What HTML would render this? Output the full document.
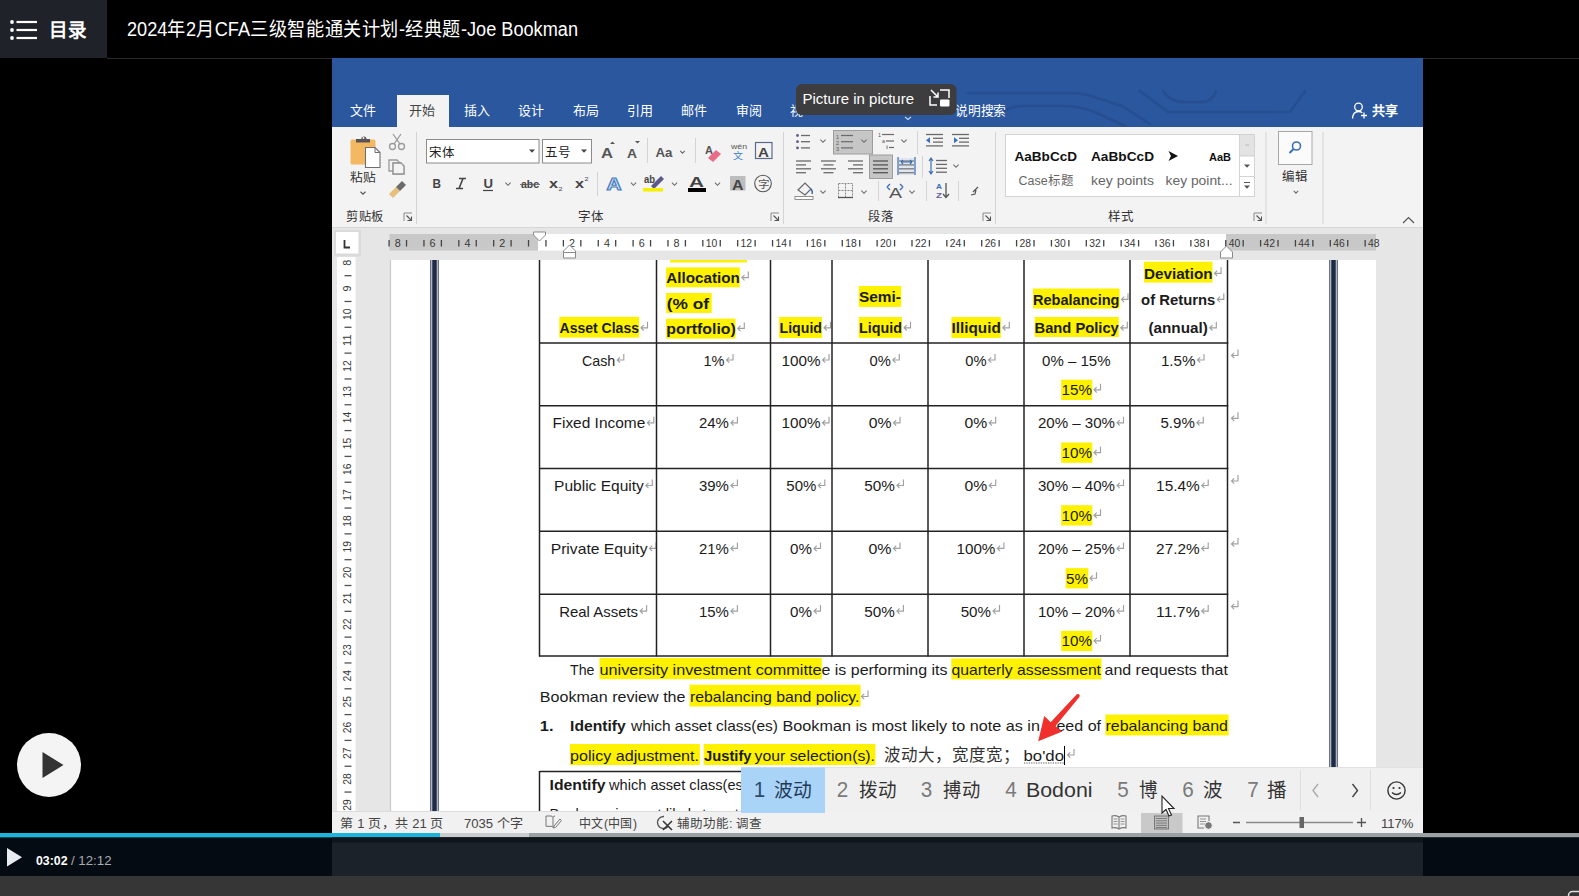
<!DOCTYPE html>
<html lang="zh-CN"><head><meta charset="utf-8"><title>Word video</title>
<style>
html,body{margin:0;padding:0;background:#000;width:1579px;height:896px;overflow:hidden}
svg{display:block}
text{font-family:"Liberation Sans",sans-serif}
</style></head><body>
<svg width="1579" height="896" viewBox="0 0 1579 896">
<rect x="0" y="0" width="1579" height="896" fill="#000" />
<rect x="0" y="0" width="107" height="58" fill="#1f2329" />
<line x1="107" y1="58.5" x2="1579" y2="58.5" stroke="#2a2a2a" stroke-width="1" />
<circle cx="12" cy="22" r="1.9" fill="#fff"/>
<rect x="16.5" y="20.9" width="20.5" height="2.2" fill="#fff" />
<circle cx="12" cy="30" r="1.9" fill="#fff"/>
<rect x="16.5" y="28.9" width="20.5" height="2.2" fill="#fff" />
<circle cx="12" cy="38" r="1.9" fill="#fff"/>
<rect x="16.5" y="36.9" width="20.5" height="2.2" fill="#fff" />
<text x="49" y="37" font-size="19" fill="#fff" font-weight="bold" textLength="37" lengthAdjust="spacingAndGlyphs" >目录</text>
<text x="127" y="36" font-size="19.5" fill="#fff" textLength="451" lengthAdjust="spacingAndGlyphs" >2024年2月CFA三级智能通关计划-经典题-Joe Bookman</text>
<rect x="332" y="58" width="1091" height="69" fill="#2a579e" />
<rect x="397" y="95" width="52" height="32" fill="#f3f3f3" />
<g stroke="#24498a" stroke-width="2.6" fill="none" stroke-linecap="round" opacity="0.6">
<path d="M968 93 H1072 Q1085 93 1100 99 L1122 106 L1150 124" fill="none" />
<path d="M1003 112 Q1010 106 1025 106 H1062 Q1080 106 1095 112 L1125 126" fill="none" />
<path d="M1140 91 L1168 112 H1290 L1305 91" fill="none" />
<path d="M1163 91 Q1170 102 1185 102 H1202 Q1212 102 1216 91" fill="none" />
</g>
<text x="350" y="114.5" font-size="13" fill="#fff" font-weight="500" textLength="26" lengthAdjust="spacingAndGlyphs" >文件</text>
<text x="409" y="114.5" font-size="13" fill="#444" font-weight="500" textLength="26" lengthAdjust="spacingAndGlyphs" >开始</text>
<text x="464" y="114.5" font-size="13" fill="#fff" font-weight="500" textLength="26" lengthAdjust="spacingAndGlyphs" >插入</text>
<text x="518" y="114.5" font-size="13" fill="#fff" font-weight="500" textLength="26" lengthAdjust="spacingAndGlyphs" >设计</text>
<text x="573" y="114.5" font-size="13" fill="#fff" font-weight="500" textLength="26" lengthAdjust="spacingAndGlyphs" >布局</text>
<text x="627" y="114.5" font-size="13" fill="#fff" font-weight="500" textLength="26" lengthAdjust="spacingAndGlyphs" >引用</text>
<text x="681" y="114.5" font-size="13" fill="#fff" font-weight="500" textLength="26" lengthAdjust="spacingAndGlyphs" >邮件</text>
<text x="736" y="114.5" font-size="13" fill="#fff" font-weight="500" textLength="26" lengthAdjust="spacingAndGlyphs" >审阅</text>
<text x="790" y="114.5" font-size="13" fill="#fff" font-weight="500" textLength="13" lengthAdjust="spacingAndGlyphs" >视</text>
<text x="955" y="114.5" font-size="13" fill="#fff" font-weight="500" textLength="51" lengthAdjust="spacingAndGlyphs" >说明搜索</text>
<circle cx="1358.5" cy="107" r="3.8" fill="none" stroke="#fff" stroke-width="1.3"/>
<path d="M1352.5 118.5 c0.3-4.5 2.8-7 6-7 c1.5 0 2.8 0.5 3.8 1.3 M1361 115.5 h6 M1364 112.5 v6" fill="none" stroke="#fff" stroke-width="1.3" />
<text x="1372" y="114.5" font-size="13" fill="#fff" font-weight="bold" textLength="26" lengthAdjust="spacingAndGlyphs" >共享</text>
<rect x="332" y="127" width="1091" height="100" fill="#f3f3f3" />
<line x1="332" y1="227.5" x2="1423" y2="227.5" stroke="#d6d6d6" stroke-width="1" />
<rect x="350.5" y="139.5" width="25" height="25" fill="#f4b862" rx="1.5"/>
<path d="M356 142.5 h14 v-3.5 h-3.5 a2.6 2.6 0 0 0 -5.2 0 h-5.3 Z" fill="#5a5555" />
<circle cx="363.5" cy="138" r="1" fill="#f3f3f3"/>
<path d="M365.5 147.5 h9.5 l5 5 v15 h-14.5 Z" fill="#fff" stroke="#6f6f6f" stroke-width="1.1" />
<path d="M375 147.5 v5 h5" fill="none" stroke="#6f6f6f" stroke-width="1" />
<text x="349.5" y="182" font-size="12.5" fill="#333" font-weight="500" textLength="26.5" lengthAdjust="spacingAndGlyphs" >粘贴</text>
<path d="M360.5 191.75 L363 194.25 L365.5 191.75" fill="none" stroke="#555" stroke-width="1.1" />
<g fill="none" stroke="#9a9a9a" stroke-width="1.3">
<circle cx="392.5" cy="146.5" r="3"/><circle cx="401.5" cy="146.5" r="3"/>
<path d="M394 144 L401 134 M400 144 L393 134" fill="none" />
<path d="M389 160 h8 l3 3 v8 h-11 Z M393 163 h8 l3 3 v8 h-11 Z" fill="none" />
</g>
<rect x="393.5" y="163.5" width="10" height="10" fill="#f3f3f3" />
<path d="M393 163 h8 l3 3 v8 h-11 Z" fill="none" stroke="#9a9a9a" stroke-width="1.3" />
<path d="M389 194 L396 187 L400 191 L393 198 Z" fill="#e8c07d" />
<path d="M396 187 L402 181 L406 185 L400 191 Z" fill="#6b6b6b" />
<line x1="416.5" y1="132" x2="416.5" y2="224" stroke="#d4d4d4" stroke-width="1" />
<text x="346" y="220.5" font-size="12.5" fill="#333" font-weight="500" textLength="38" lengthAdjust="spacingAndGlyphs" >剪贴板</text>
<path d="M404 221 V213 H412" fill="none" stroke="#8a8a8a" stroke-width="1" />
<path d="M406.5 215.5 L411.5 220.5 M411.5 216.5 V220.5 H407.5" fill="none" stroke="#555" stroke-width="1.1" />
<rect x="426.5" y="139.5" width="112.5" height="23.5" fill="#fff" stroke="#8c8c8c" stroke-width="1"/>
<text x="428.5" y="156.8" font-size="12.5" fill="#222" textLength="26" lengthAdjust="spacingAndGlyphs" >宋体</text>
<path d="M529 149.5 L535 149.5 L532 152.8 Z" fill="#444" />
<rect x="542.5" y="139.5" width="49" height="23.5" fill="#fff" stroke="#8c8c8c" stroke-width="1"/>
<text x="544.5" y="156.8" font-size="12.5" fill="#222" textLength="26" lengthAdjust="spacingAndGlyphs" >五号</text>
<path d="M581 149.5 L587 149.5 L584 152.8 Z" fill="#444" />
<text x="601" y="157.5" font-size="15" fill="#555" font-weight="bold" textLength="12" lengthAdjust="spacingAndGlyphs" >A</text>
<path d="M610 144 l2.5 -2.5 l2.5 2.5 Z" fill="#555" />
<text x="627" y="157.5" font-size="12.5" fill="#555" font-weight="bold" textLength="10" lengthAdjust="spacingAndGlyphs" >A</text>
<path d="M635 141 h5 l-2.5 2.5 Z" fill="#555" />
<line x1="647.5" y1="138" x2="647.5" y2="163" stroke="#d4d4d4" stroke-width="1" />
<text x="655.5" y="156.5" font-size="13.5" fill="#555" font-weight="bold" textLength="17" lengthAdjust="spacingAndGlyphs" >Aa</text>
<path d="M680.2 150.85 L682.5 153.15 L684.8 150.85" fill="none" stroke="#6a6a6a" stroke-width="1.1" />
<line x1="695.5" y1="138" x2="695.5" y2="163" stroke="#d4d4d4" stroke-width="1" />
<text x="705" y="154" font-size="11" fill="#555" font-weight="bold" textLength="8" lengthAdjust="spacingAndGlyphs" >A</text>
<path d="M708 158 L716 150 L721 154 L713 162 Z" fill="#e96b87" />
<text x="731" y="149" font-size="7" fill="#555" textLength="16" lengthAdjust="spacingAndGlyphs" >wén</text>
<text x="733" y="159" font-size="9" fill="#3b7fc4" textLength="10" lengthAdjust="spacingAndGlyphs" >文</text>
<rect x="755.5" y="142.5" width="16.5" height="16" fill="none" stroke="#5a6a8a" stroke-width="1.2"/>
<text x="758" y="156.8" font-size="13.5" fill="#444" font-weight="bold" textLength="11" lengthAdjust="spacingAndGlyphs" >A</text>
<text x="432.5" y="188.2" font-size="12.5" fill="#444" font-weight="bold" textLength="8.5" lengthAdjust="spacingAndGlyphs" >B</text>
<path d="M459 178.5 h7 M456 188.5 h7 M463 178.5 L459 188.5" fill="none" stroke="#444" stroke-width="1.6" />
<text x="483.5" y="187.5" font-size="12.5" fill="#444" font-weight="bold" textLength="9.5" lengthAdjust="spacingAndGlyphs" >U</text>
<line x1="483" y1="190.5" x2="493" y2="190.5" stroke="#444" stroke-width="1.2" />
<path d="M505.4 182.7 L508 185.3 L510.6 182.7" fill="none" stroke="#6a6a6a" stroke-width="1.1" />
<text x="521" y="188" font-size="11.5" fill="#444" font-weight="bold" textLength="18" lengthAdjust="spacingAndGlyphs" >abc</text>
<line x1="520" y1="184.5" x2="540" y2="184.5" stroke="#555" stroke-width="0.8" />
<text x="549" y="188" font-size="13" fill="#444" font-weight="bold" textLength="9" lengthAdjust="spacingAndGlyphs" >x</text>
<text x="558.5" y="191" font-size="6" fill="#444" textLength="4" lengthAdjust="spacingAndGlyphs" >2</text>
<text x="575" y="188" font-size="13" fill="#444" font-weight="bold" textLength="9" lengthAdjust="spacingAndGlyphs" >x</text>
<text x="584.5" y="181" font-size="6" fill="#444" textLength="4" lengthAdjust="spacingAndGlyphs" >2</text>
<line x1="597.5" y1="172" x2="597.5" y2="196" stroke="#d4d4d4" stroke-width="1" />
<text x="606.5" y="190" font-size="16" fill="#dbe8f7" font-weight="bold" textLength="15" lengthAdjust="spacingAndGlyphs" stroke="#4a7fc1" stroke-width="1.1">A</text>
<path d="M630.9 182.7 L633.5 185.3 L636.1 182.7" fill="none" stroke="#6a6a6a" stroke-width="1.1" />
<text x="644" y="183" font-size="10" fill="#444" font-weight="bold" textLength="11" lengthAdjust="spacingAndGlyphs" >ab</text>
<path d="M651 186 L661 176 L664 179 L654 189 Z" fill="#5a5a8a" />
<rect x="643" y="188" width="20" height="3.5" fill="#f5f000" />
<path d="M671.9 182.7 L674.5 185.3 L677.1 182.7" fill="none" stroke="#6a6a6a" stroke-width="1.1" />
<text x="689" y="187" font-size="15" fill="#444" font-weight="bold" textLength="15" lengthAdjust="spacingAndGlyphs" >A</text>
<rect x="688" y="188" width="18" height="4" fill="#000" />
<path d="M714.9 182.7 L717.5 185.3 L720.1 182.7" fill="none" stroke="#6a6a6a" stroke-width="1.1" />
<rect x="730" y="176" width="15.5" height="14.5" fill="#bdbdbd" />
<text x="732" y="189.5" font-size="14" fill="#444" font-weight="bold" textLength="11.5" lengthAdjust="spacingAndGlyphs" >A</text>
<circle cx="763" cy="183.5" r="8.3" fill="none" stroke="#555" stroke-width="1.1"/>
<text x="757.5" y="188" font-size="10.5" fill="#555" textLength="11" lengthAdjust="spacingAndGlyphs" >字</text>
<text x="578" y="220.5" font-size="12.5" fill="#333" font-weight="500" textLength="26" lengthAdjust="spacingAndGlyphs" >字体</text>
<path d="M771 221 V213 H779" fill="none" stroke="#8a8a8a" stroke-width="1" />
<path d="M773.5 215.5 L778.5 220.5 M778.5 216.5 V220.5 H774.5" fill="none" stroke="#555" stroke-width="1.1" />
<line x1="783.5" y1="132" x2="783.5" y2="224" stroke="#d4d4d4" stroke-width="1" />
<circle cx="797.5" cy="135.5" r="1.4" fill="#5a5a8a"/>
<line x1="801" y1="135.5" x2="810" y2="135.5" stroke="#6a6a6a" stroke-width="1.3" />
<circle cx="797.5" cy="141.7" r="1.4" fill="#5a5a8a"/>
<line x1="801" y1="141.7" x2="810" y2="141.7" stroke="#6a6a6a" stroke-width="1.3" />
<circle cx="797.5" cy="147.9" r="1.4" fill="#5a5a8a"/>
<line x1="801" y1="147.9" x2="810" y2="147.9" stroke="#6a6a6a" stroke-width="1.3" />
<path d="M820.4 139.7 L823 142.3 L825.6 139.7" fill="none" stroke="#6a6a6a" stroke-width="1.1" />
<rect x="833.5" y="130.5" width="39" height="23.5" fill="#c6c6c6" stroke="#9d9d9d" stroke-width="1"/>
<text x="836" y="138.5" font-size="5.5" fill="#555" textLength="3" lengthAdjust="spacingAndGlyphs" >1</text>
<line x1="841" y1="135.5" x2="853" y2="135.5" stroke="#6a6a6a" stroke-width="1.2" />
<text x="836" y="144.7" font-size="5.5" fill="#555" textLength="3" lengthAdjust="spacingAndGlyphs" >2</text>
<line x1="841" y1="141.7" x2="853" y2="141.7" stroke="#6a6a6a" stroke-width="1.2" />
<text x="836" y="150.9" font-size="5.5" fill="#555" textLength="3" lengthAdjust="spacingAndGlyphs" >3</text>
<line x1="841" y1="147.9" x2="853" y2="147.9" stroke="#6a6a6a" stroke-width="1.2" />
<path d="M861.4 139.7 L864 142.3 L866.6 139.7" fill="none" stroke="#6a6a6a" stroke-width="1.1" />
<text x="878" y="137" font-size="5.5" fill="#555" textLength="3" lengthAdjust="spacingAndGlyphs" >1</text>
<line x1="882" y1="134.5" x2="894" y2="134.5" stroke="#6a6a6a" stroke-width="1.2" />
<text x="882" y="143" font-size="5.5" fill="#555" textLength="3" lengthAdjust="spacingAndGlyphs" >a</text>
<line x1="886" y1="141" x2="894" y2="141" stroke="#6a6a6a" stroke-width="1.2" />
<text x="886" y="149" font-size="5.5" fill="#555" textLength="2" lengthAdjust="spacingAndGlyphs" >i</text>
<line x1="889" y1="147.5" x2="894" y2="147.5" stroke="#6a6a6a" stroke-width="1.2" />
<path d="M901.4 139.7 L904 142.3 L906.6 139.7" fill="none" stroke="#6a6a6a" stroke-width="1.1" />
<line x1="917.5" y1="131" x2="917.5" y2="154" stroke="#d4d4d4" stroke-width="1" />
<line x1="926" y1="134.5" x2="943" y2="134.5" stroke="#6a6a6a" stroke-width="1.3" />
<line x1="933" y1="138.3" x2="943" y2="138.3" stroke="#6a6a6a" stroke-width="1.3" />
<line x1="933" y1="142.1" x2="943" y2="142.1" stroke="#6a6a6a" stroke-width="1.3" />
<line x1="926" y1="145.9" x2="943" y2="145.9" stroke="#6a6a6a" stroke-width="1.3" />
<path d="M926 140.2 l4 -3 v6 Z" fill="#3b6fb5" />
<line x1="952" y1="134.5" x2="969" y2="134.5" stroke="#6a6a6a" stroke-width="1.3" />
<line x1="959" y1="138.3" x2="969" y2="138.3" stroke="#6a6a6a" stroke-width="1.3" />
<line x1="959" y1="142.1" x2="969" y2="142.1" stroke="#6a6a6a" stroke-width="1.3" />
<line x1="952" y1="145.9" x2="969" y2="145.9" stroke="#6a6a6a" stroke-width="1.3" />
<path d="M958 140.2 l-4 -3 v6 Z" fill="#3b6fb5" />
<line x1="796" y1="161.0" x2="811" y2="161.0" stroke="#6a6a6a" stroke-width="1.3" />
<line x1="796" y1="164.9" x2="806" y2="164.9" stroke="#6a6a6a" stroke-width="1.3" />
<line x1="796" y1="168.8" x2="811" y2="168.8" stroke="#6a6a6a" stroke-width="1.3" />
<line x1="796" y1="172.7" x2="806" y2="172.7" stroke="#6a6a6a" stroke-width="1.3" />
<line x1="821" y1="161.0" x2="836" y2="161.0" stroke="#6a6a6a" stroke-width="1.3" />
<line x1="823.5" y1="164.9" x2="833.5" y2="164.9" stroke="#6a6a6a" stroke-width="1.3" />
<line x1="821" y1="168.8" x2="836" y2="168.8" stroke="#6a6a6a" stroke-width="1.3" />
<line x1="823.5" y1="172.7" x2="833.5" y2="172.7" stroke="#6a6a6a" stroke-width="1.3" />
<line x1="848" y1="161.0" x2="863" y2="161.0" stroke="#6a6a6a" stroke-width="1.3" />
<line x1="853" y1="164.9" x2="863" y2="164.9" stroke="#6a6a6a" stroke-width="1.3" />
<line x1="848" y1="168.8" x2="863" y2="168.8" stroke="#6a6a6a" stroke-width="1.3" />
<line x1="853" y1="172.7" x2="863" y2="172.7" stroke="#6a6a6a" stroke-width="1.3" />
<rect x="869.5" y="155" width="23" height="23.5" fill="#c6c6c6" stroke="#9d9d9d" stroke-width="1"/>
<line x1="873" y1="161.0" x2="888" y2="161.0" stroke="#555" stroke-width="1.3" />
<line x1="873" y1="164.9" x2="888" y2="164.9" stroke="#555" stroke-width="1.3" />
<line x1="873" y1="168.8" x2="888" y2="168.8" stroke="#555" stroke-width="1.3" />
<line x1="873" y1="172.7" x2="888" y2="172.7" stroke="#555" stroke-width="1.3" />
<rect x="898" y="158" width="17" height="17" fill="#dfe6f0" />
<line x1="899" y1="161.0" x2="914" y2="161.0" stroke="#7a7a7a" stroke-width="1.3" />
<line x1="899" y1="164.9" x2="914" y2="164.9" stroke="#7a7a7a" stroke-width="1.3" />
<line x1="899" y1="168.8" x2="914" y2="168.8" stroke="#7a7a7a" stroke-width="1.3" />
<line x1="899" y1="172.7" x2="914" y2="172.7" stroke="#7a7a7a" stroke-width="1.3" />
<path d="M898 157 v18 M915 157 v18" fill="none" stroke="#3b6fb5" stroke-width="1.2" />
<path d="M901 162 h11 M901 162 l2 -2 M901 162 l2 2 M912 162 l-2 -2 M912 162 l-2 2" fill="none" stroke="#3b6fb5" stroke-width="1.1" />
<line x1="922.5" y1="156" x2="922.5" y2="178" stroke="#d4d4d4" stroke-width="1" />
<line x1="936" y1="160.5" x2="947" y2="160.5" stroke="#6a6a6a" stroke-width="1.3" />
<line x1="936" y1="164.4" x2="947" y2="164.4" stroke="#6a6a6a" stroke-width="1.3" />
<line x1="936" y1="168.3" x2="947" y2="168.3" stroke="#6a6a6a" stroke-width="1.3" />
<line x1="936" y1="172.2" x2="947" y2="172.2" stroke="#6a6a6a" stroke-width="1.3" />
<path d="M931 159 v14 M929 161 l2 -3 l2 3 M929 171 l2 3 l2 -3" fill="none" stroke="#3b6fb5" stroke-width="1.2" />
<path d="M953.4 164.7 L956 167.3 L958.6 164.7" fill="none" stroke="#6a6a6a" stroke-width="1.1" />
<path d="M798 190 L805 183 L811 189 L805 195 Z" fill="none" stroke="#666" stroke-width="1.2" />
<path d="M811 189 q2 3 1 5" fill="none" stroke="#3b6fb5" stroke-width="1.5" />
<rect x="795" y="196.5" width="18" height="3" fill="#fff" stroke="#777" stroke-width="0.8"/>
<path d="M820.4 190.7 L823 193.3 L825.6 190.7" fill="none" stroke="#6a6a6a" stroke-width="1.1" />
<rect x="838.5" y="183.5" width="14" height="14" fill="none" stroke="#8a8a8a" stroke-width="1" stroke-dasharray="2 1"/>
<line x1="845.5" y1="183.5" x2="845.5" y2="197.5" stroke="#8a8a8a" stroke-width="1" stroke-dasharray="2 1"/>
<line x1="838.5" y1="190.5" x2="852.5" y2="190.5" stroke="#8a8a8a" stroke-width="1" stroke-dasharray="2 1"/>
<line x1="838" y1="197.5" x2="853" y2="197.5" stroke="#555" stroke-width="1.3" />
<path d="M861.4 190.7 L864 193.3 L866.6 190.7" fill="none" stroke="#6a6a6a" stroke-width="1.1" />
<line x1="878.5" y1="181" x2="878.5" y2="201" stroke="#d4d4d4" stroke-width="1" />
<text x="889" y="198" font-size="14" fill="#555" textLength="13" lengthAdjust="spacingAndGlyphs" >A</text>
<path d="M887 187 l3 -3 M887 187 l3 3 M903 187 l-3 -3 M903 187 l-3 3" fill="none" stroke="#3b6fb5" stroke-width="1.4" />
<path d="M909.4 190.7 L912 193.3 L914.6 190.7" fill="none" stroke="#6a6a6a" stroke-width="1.1" />
<line x1="926.5" y1="181" x2="926.5" y2="201" stroke="#d4d4d4" stroke-width="1" />
<text x="936" y="189" font-size="7.5" fill="#3b6fb5" font-weight="bold" textLength="6" lengthAdjust="spacingAndGlyphs" >A</text>
<text x="936" y="198" font-size="7.5" fill="#6a5aa0" font-weight="bold" textLength="6" lengthAdjust="spacingAndGlyphs" >Z</text>
<path d="M946 183 v14 M943 194 l3 3.5 l3 -3.5" fill="none" stroke="#555" stroke-width="1.3" />
<line x1="958.5" y1="181" x2="958.5" y2="201" stroke="#d4d4d4" stroke-width="1" />
<path d="M973 192 l5 -5 M971 195 l4 -1 l1 -4" fill="none" stroke="#555" stroke-width="1.2" />
<text x="868" y="220.5" font-size="12.5" fill="#333" font-weight="500" textLength="25.5" lengthAdjust="spacingAndGlyphs" >段落</text>
<path d="M983 221 V213 H991" fill="none" stroke="#8a8a8a" stroke-width="1" />
<path d="M985.5 215.5 L990.5 220.5 M990.5 216.5 V220.5 H986.5" fill="none" stroke="#555" stroke-width="1.1" />
<line x1="995.5" y1="132" x2="995.5" y2="224" stroke="#d4d4d4" stroke-width="1" />
<rect x="1005.5" y="134.5" width="249" height="62" fill="#fff" stroke="#d3d3d3" stroke-width="1"/>
<rect x="1239.5" y="134.5" width="15" height="21.5" fill="#e3e3e3" stroke="#d3d3d3" stroke-width="1"/>
<rect x="1239.5" y="156" width="15" height="20.5" fill="#fff" stroke="#d3d3d3" stroke-width="1"/>
<rect x="1239.5" y="176.5" width="15" height="20" fill="#fff" stroke="#d3d3d3" stroke-width="1"/>
<line x1="1245" y1="145" x2="1249" y2="145" stroke="#bbb" stroke-width="1" />
<path d="M1244 164.5 L1250 164.5 L1247 167.8 Z" fill="#555" />
<line x1="1244" y1="182.5" x2="1250" y2="182.5" stroke="#555" stroke-width="1" />
<path d="M1244 185.5 L1250 185.5 L1247 188.8 Z" fill="#555" />
<text x="1014.5" y="160.5" font-size="12.5" fill="#111" font-weight="bold" textLength="62.5" lengthAdjust="spacingAndGlyphs" >AaBbCcD</text>
<text x="1091" y="160.5" font-size="12.5" fill="#111" font-weight="bold" textLength="63" lengthAdjust="spacingAndGlyphs" >AaBbCcD</text>
<path d="M1168.5 151 L1178 156 L1168.5 161 L1171 156 Z" fill="#111" />
<text x="1209" y="160.5" font-size="10.5" fill="#111" font-weight="bold" textLength="22" lengthAdjust="spacingAndGlyphs" >AaB</text>
<text x="1018.5" y="185" font-size="12.5" fill="#666" textLength="55" lengthAdjust="spacingAndGlyphs" >Case标题</text>
<text x="1091" y="185" font-size="12.5" fill="#666" textLength="63" lengthAdjust="spacingAndGlyphs" >key points</text>
<text x="1165.5" y="185" font-size="12.5" fill="#666" textLength="67" lengthAdjust="spacingAndGlyphs" >key point...</text>
<text x="1108" y="220.5" font-size="12.5" fill="#333" font-weight="500" textLength="26" lengthAdjust="spacingAndGlyphs" >样式</text>
<path d="M1254 221 V213 H1262" fill="none" stroke="#8a8a8a" stroke-width="1" />
<path d="M1256.5 215.5 L1261.5 220.5 M1261.5 216.5 V220.5 H1257.5" fill="none" stroke="#555" stroke-width="1.1" />
<line x1="1266" y1="132" x2="1266" y2="224" stroke="#d4d4d4" stroke-width="1" />
<rect x="1278.5" y="131.5" width="33.5" height="33" fill="#fbfbfb" stroke="#a8a8a8" stroke-width="1"/>
<circle cx="1296.5" cy="146" r="4" fill="none" stroke="#3b6fb5" stroke-width="1.6"/>
<line x1="1293.5" y1="149" x2="1289.5" y2="153" stroke="#3b6fb5" stroke-width="2" />
<text x="1282" y="181" font-size="12.5" fill="#333" font-weight="500" textLength="26" lengthAdjust="spacingAndGlyphs" >编辑</text>
<path d="M1293.8 190.9 L1296 193.1 L1298.2 190.9" fill="none" stroke="#6a6a6a" stroke-width="1.1" />
<line x1="1323" y1="132" x2="1323" y2="224" stroke="#d4d4d4" stroke-width="1" />
<path d="M1403 223 L1408.5 217.5 L1414 223" fill="none" stroke="#555" stroke-width="1.2" />
<rect x="332" y="228" width="1091" height="583" fill="#e6e6e6" />
<rect x="334" y="230" width="27" height="26.5" fill="#dadada" />
<rect x="336" y="232" width="22.5" height="21.5" fill="#fff" />
<path d="M344.5 240 v7.5 h5.5" fill="none" stroke="#333" stroke-width="1.8" />
<rect x="389.5" y="234" width="148.5" height="16.5" fill="#c8c8c8" />
<rect x="538" y="234" width="688" height="16.5" fill="#fff" />
<rect x="1226" y="234" width="150" height="16.5" fill="#c8c8c8" />
<g fill="#505050">
<text x="394.76000000000005" y="246.5" font-size="10.5" fill="#383838" textLength="6" lengthAdjust="spacingAndGlyphs" >8</text>
<rect x="388.44500000000005" y="240" width="1.3" height="6.5" fill="#444" />
<rect x="405.875" y="240" width="1.3" height="6.5" fill="#444" />
<text x="429.62000000000006" y="246.5" font-size="10.5" fill="#383838" textLength="6" lengthAdjust="spacingAndGlyphs" >6</text>
<rect x="423.30500000000006" y="240" width="1.3" height="6.5" fill="#444" />
<rect x="440.735" y="240" width="1.3" height="6.5" fill="#444" />
<text x="464.48" y="246.5" font-size="10.5" fill="#383838" textLength="6" lengthAdjust="spacingAndGlyphs" >4</text>
<rect x="458.165" y="240" width="1.3" height="6.5" fill="#444" />
<rect x="475.59499999999997" y="240" width="1.3" height="6.5" fill="#444" />
<text x="499.34000000000003" y="246.5" font-size="10.5" fill="#383838" textLength="6" lengthAdjust="spacingAndGlyphs" >2</text>
<rect x="493.02500000000003" y="240" width="1.3" height="6.5" fill="#444" />
<rect x="510.455" y="240" width="1.3" height="6.5" fill="#444" />
<rect x="527.885" y="240" width="1.3" height="6.5" fill="#444" />
<rect x="545.315" y="240" width="1.3" height="6.5" fill="#444" />
<text x="569.0600000000001" y="246.5" font-size="10.5" fill="#383838" textLength="6" lengthAdjust="spacingAndGlyphs" >2</text>
<rect x="562.745" y="240" width="1.3" height="6.5" fill="#444" />
<rect x="580.1750000000001" y="240" width="1.3" height="6.5" fill="#444" />
<text x="603.9200000000001" y="246.5" font-size="10.5" fill="#383838" textLength="6" lengthAdjust="spacingAndGlyphs" >4</text>
<rect x="597.605" y="240" width="1.3" height="6.5" fill="#444" />
<rect x="615.0350000000001" y="240" width="1.3" height="6.5" fill="#444" />
<text x="638.7800000000001" y="246.5" font-size="10.5" fill="#383838" textLength="6" lengthAdjust="spacingAndGlyphs" >6</text>
<rect x="632.465" y="240" width="1.3" height="6.5" fill="#444" />
<rect x="649.8950000000001" y="240" width="1.3" height="6.5" fill="#444" />
<text x="673.6400000000001" y="246.5" font-size="10.5" fill="#383838" textLength="6" lengthAdjust="spacingAndGlyphs" >8</text>
<rect x="667.325" y="240" width="1.3" height="6.5" fill="#444" />
<rect x="684.7550000000001" y="240" width="1.3" height="6.5" fill="#444" />
<text x="705.75" y="246.5" font-size="10.5" fill="#383838" textLength="11.5" lengthAdjust="spacingAndGlyphs" >10</text>
<rect x="702.185" y="240" width="1.3" height="6.5" fill="#444" />
<rect x="719.615" y="240" width="1.3" height="6.5" fill="#444" />
<text x="740.61" y="246.5" font-size="10.5" fill="#383838" textLength="11.5" lengthAdjust="spacingAndGlyphs" >12</text>
<rect x="737.045" y="240" width="1.3" height="6.5" fill="#444" />
<rect x="754.475" y="240" width="1.3" height="6.5" fill="#444" />
<text x="775.47" y="246.5" font-size="10.5" fill="#383838" textLength="11.5" lengthAdjust="spacingAndGlyphs" >14</text>
<rect x="771.905" y="240" width="1.3" height="6.5" fill="#444" />
<rect x="789.335" y="240" width="1.3" height="6.5" fill="#444" />
<text x="810.33" y="246.5" font-size="10.5" fill="#383838" textLength="11.5" lengthAdjust="spacingAndGlyphs" >16</text>
<rect x="806.765" y="240" width="1.3" height="6.5" fill="#444" />
<rect x="824.195" y="240" width="1.3" height="6.5" fill="#444" />
<text x="845.19" y="246.5" font-size="10.5" fill="#383838" textLength="11.5" lengthAdjust="spacingAndGlyphs" >18</text>
<rect x="841.625" y="240" width="1.3" height="6.5" fill="#444" />
<rect x="859.0550000000001" y="240" width="1.3" height="6.5" fill="#444" />
<text x="880.0500000000001" y="246.5" font-size="10.5" fill="#383838" textLength="11.5" lengthAdjust="spacingAndGlyphs" >20</text>
<rect x="876.485" y="240" width="1.3" height="6.5" fill="#444" />
<rect x="893.9150000000001" y="240" width="1.3" height="6.5" fill="#444" />
<text x="914.9100000000001" y="246.5" font-size="10.5" fill="#383838" textLength="11.5" lengthAdjust="spacingAndGlyphs" >22</text>
<rect x="911.345" y="240" width="1.3" height="6.5" fill="#444" />
<rect x="928.7750000000001" y="240" width="1.3" height="6.5" fill="#444" />
<text x="949.77" y="246.5" font-size="10.5" fill="#383838" textLength="11.5" lengthAdjust="spacingAndGlyphs" >24</text>
<rect x="946.2049999999999" y="240" width="1.3" height="6.5" fill="#444" />
<rect x="963.635" y="240" width="1.3" height="6.5" fill="#444" />
<text x="984.6300000000001" y="246.5" font-size="10.5" fill="#383838" textLength="11.5" lengthAdjust="spacingAndGlyphs" >26</text>
<rect x="981.065" y="240" width="1.3" height="6.5" fill="#444" />
<rect x="998.4950000000001" y="240" width="1.3" height="6.5" fill="#444" />
<text x="1019.49" y="246.5" font-size="10.5" fill="#383838" textLength="11.5" lengthAdjust="spacingAndGlyphs" >28</text>
<rect x="1015.925" y="240" width="1.3" height="6.5" fill="#444" />
<rect x="1033.355" y="240" width="1.3" height="6.5" fill="#444" />
<text x="1054.35" y="246.5" font-size="10.5" fill="#383838" textLength="11.5" lengthAdjust="spacingAndGlyphs" >30</text>
<rect x="1050.785" y="240" width="1.3" height="6.5" fill="#444" />
<rect x="1068.215" y="240" width="1.3" height="6.5" fill="#444" />
<text x="1089.21" y="246.5" font-size="10.5" fill="#383838" textLength="11.5" lengthAdjust="spacingAndGlyphs" >32</text>
<rect x="1085.6450000000002" y="240" width="1.3" height="6.5" fill="#444" />
<rect x="1103.075" y="240" width="1.3" height="6.5" fill="#444" />
<text x="1124.0700000000002" y="246.5" font-size="10.5" fill="#383838" textLength="11.5" lengthAdjust="spacingAndGlyphs" >34</text>
<rect x="1120.5050000000003" y="240" width="1.3" height="6.5" fill="#444" />
<rect x="1137.9350000000002" y="240" width="1.3" height="6.5" fill="#444" />
<text x="1158.93" y="246.5" font-size="10.5" fill="#383838" textLength="11.5" lengthAdjust="spacingAndGlyphs" >36</text>
<rect x="1155.3650000000002" y="240" width="1.3" height="6.5" fill="#444" />
<rect x="1172.795" y="240" width="1.3" height="6.5" fill="#444" />
<text x="1193.79" y="246.5" font-size="10.5" fill="#383838" textLength="11.5" lengthAdjust="spacingAndGlyphs" >38</text>
<rect x="1190.2250000000001" y="240" width="1.3" height="6.5" fill="#444" />
<rect x="1207.655" y="240" width="1.3" height="6.5" fill="#444" />
<text x="1228.65" y="246.5" font-size="10.5" fill="#383838" textLength="11.5" lengthAdjust="spacingAndGlyphs" >40</text>
<rect x="1225.0850000000003" y="240" width="1.3" height="6.5" fill="#444" />
<rect x="1242.515" y="240" width="1.3" height="6.5" fill="#444" />
<text x="1263.51" y="246.5" font-size="10.5" fill="#383838" textLength="11.5" lengthAdjust="spacingAndGlyphs" >42</text>
<rect x="1259.9450000000002" y="240" width="1.3" height="6.5" fill="#444" />
<rect x="1277.375" y="240" width="1.3" height="6.5" fill="#444" />
<text x="1298.37" y="246.5" font-size="10.5" fill="#383838" textLength="11.5" lengthAdjust="spacingAndGlyphs" >44</text>
<rect x="1294.805" y="240" width="1.3" height="6.5" fill="#444" />
<rect x="1312.235" y="240" width="1.3" height="6.5" fill="#444" />
<text x="1333.23" y="246.5" font-size="10.5" fill="#383838" textLength="11.5" lengthAdjust="spacingAndGlyphs" >46</text>
<rect x="1329.6650000000002" y="240" width="1.3" height="6.5" fill="#444" />
<rect x="1347.095" y="240" width="1.3" height="6.5" fill="#444" />
<text x="1368.0900000000001" y="246.5" font-size="10.5" fill="#383838" textLength="11.5" lengthAdjust="spacingAndGlyphs" >48</text>
<rect x="1364.5250000000003" y="240" width="1.3" height="6.5" fill="#444" />
</g>
<path d="M533.5 232 h12 v3 l-6 6 l-6 -6 Z" fill="#fff" stroke="#8a8a8a" stroke-width="1" />
<path d="M563.5 251 l6 -6 l6 6 v7 h-12 Z M563.5 252.5 h12" fill="#fff" stroke="#8a8a8a" stroke-width="1" />
<path d="M1220.5 252 l6 -6 l6 6 v6 h-12 Z" fill="#fff" stroke="#8a8a8a" stroke-width="1" />
<rect x="337" y="257" width="18.5" height="554" fill="#fff" />
<text transform="translate(350.5 262.7) rotate(-90)" x="-3.0" y="0" font-size="10.5" fill="#383838" textLength="6" lengthAdjust="spacingAndGlyphs">8</text>
<rect x="344.5" y="275.01" width="7" height="1.3" fill="#555" />
<text transform="translate(350.5 288.52) rotate(-90)" x="-3.0" y="0" font-size="10.5" fill="#383838" textLength="6" lengthAdjust="spacingAndGlyphs">9</text>
<rect x="344.5" y="300.83" width="7" height="1.3" fill="#555" />
<text transform="translate(350.5 314.34) rotate(-90)" x="-5.75" y="0" font-size="10.5" fill="#383838" textLength="11.5" lengthAdjust="spacingAndGlyphs">10</text>
<rect x="344.5" y="326.65" width="7" height="1.3" fill="#555" />
<text transform="translate(350.5 340.15999999999997) rotate(-90)" x="-5.75" y="0" font-size="10.5" fill="#383838" textLength="11.5" lengthAdjust="spacingAndGlyphs">11</text>
<rect x="344.5" y="352.46999999999997" width="7" height="1.3" fill="#555" />
<text transform="translate(350.5 365.98) rotate(-90)" x="-5.75" y="0" font-size="10.5" fill="#383838" textLength="11.5" lengthAdjust="spacingAndGlyphs">12</text>
<rect x="344.5" y="378.29" width="7" height="1.3" fill="#555" />
<text transform="translate(350.5 391.79999999999995) rotate(-90)" x="-5.75" y="0" font-size="10.5" fill="#383838" textLength="11.5" lengthAdjust="spacingAndGlyphs">13</text>
<rect x="344.5" y="404.10999999999996" width="7" height="1.3" fill="#555" />
<text transform="translate(350.5 417.62) rotate(-90)" x="-5.75" y="0" font-size="10.5" fill="#383838" textLength="11.5" lengthAdjust="spacingAndGlyphs">14</text>
<rect x="344.5" y="429.93" width="7" height="1.3" fill="#555" />
<text transform="translate(350.5 443.44) rotate(-90)" x="-5.75" y="0" font-size="10.5" fill="#383838" textLength="11.5" lengthAdjust="spacingAndGlyphs">15</text>
<rect x="344.5" y="455.75" width="7" height="1.3" fill="#555" />
<text transform="translate(350.5 469.26) rotate(-90)" x="-5.75" y="0" font-size="10.5" fill="#383838" textLength="11.5" lengthAdjust="spacingAndGlyphs">16</text>
<rect x="344.5" y="481.57" width="7" height="1.3" fill="#555" />
<text transform="translate(350.5 495.08) rotate(-90)" x="-5.75" y="0" font-size="10.5" fill="#383838" textLength="11.5" lengthAdjust="spacingAndGlyphs">17</text>
<rect x="344.5" y="507.39" width="7" height="1.3" fill="#555" />
<text transform="translate(350.5 520.9) rotate(-90)" x="-5.75" y="0" font-size="10.5" fill="#383838" textLength="11.5" lengthAdjust="spacingAndGlyphs">18</text>
<rect x="344.5" y="533.2099999999999" width="7" height="1.3" fill="#555" />
<text transform="translate(350.5 546.72) rotate(-90)" x="-5.75" y="0" font-size="10.5" fill="#383838" textLength="11.5" lengthAdjust="spacingAndGlyphs">19</text>
<rect x="344.5" y="559.03" width="7" height="1.3" fill="#555" />
<text transform="translate(350.5 572.54) rotate(-90)" x="-5.75" y="0" font-size="10.5" fill="#383838" textLength="11.5" lengthAdjust="spacingAndGlyphs">20</text>
<rect x="344.5" y="584.8499999999999" width="7" height="1.3" fill="#555" />
<text transform="translate(350.5 598.36) rotate(-90)" x="-5.75" y="0" font-size="10.5" fill="#383838" textLength="11.5" lengthAdjust="spacingAndGlyphs">21</text>
<rect x="344.5" y="610.67" width="7" height="1.3" fill="#555" />
<text transform="translate(350.5 624.1800000000001) rotate(-90)" x="-5.75" y="0" font-size="10.5" fill="#383838" textLength="11.5" lengthAdjust="spacingAndGlyphs">22</text>
<rect x="344.5" y="636.49" width="7" height="1.3" fill="#555" />
<text transform="translate(350.5 650.0) rotate(-90)" x="-5.75" y="0" font-size="10.5" fill="#383838" textLength="11.5" lengthAdjust="spacingAndGlyphs">23</text>
<rect x="344.5" y="662.31" width="7" height="1.3" fill="#555" />
<text transform="translate(350.5 675.8199999999999) rotate(-90)" x="-5.75" y="0" font-size="10.5" fill="#383838" textLength="11.5" lengthAdjust="spacingAndGlyphs">24</text>
<rect x="344.5" y="688.1299999999999" width="7" height="1.3" fill="#555" />
<text transform="translate(350.5 701.64) rotate(-90)" x="-5.75" y="0" font-size="10.5" fill="#383838" textLength="11.5" lengthAdjust="spacingAndGlyphs">25</text>
<rect x="344.5" y="713.9499999999999" width="7" height="1.3" fill="#555" />
<text transform="translate(350.5 727.46) rotate(-90)" x="-5.75" y="0" font-size="10.5" fill="#383838" textLength="11.5" lengthAdjust="spacingAndGlyphs">26</text>
<rect x="344.5" y="739.77" width="7" height="1.3" fill="#555" />
<text transform="translate(350.5 753.28) rotate(-90)" x="-5.75" y="0" font-size="10.5" fill="#383838" textLength="11.5" lengthAdjust="spacingAndGlyphs">27</text>
<rect x="344.5" y="765.5899999999999" width="7" height="1.3" fill="#555" />
<text transform="translate(350.5 779.0999999999999) rotate(-90)" x="-5.75" y="0" font-size="10.5" fill="#383838" textLength="11.5" lengthAdjust="spacingAndGlyphs">28</text>
<rect x="344.5" y="791.4099999999999" width="7" height="1.3" fill="#555" />
<text transform="translate(350.5 804.9200000000001) rotate(-90)" x="-5.75" y="0" font-size="10.5" fill="#383838" textLength="11.5" lengthAdjust="spacingAndGlyphs">29</text>
<rect x="390" y="260" width="986" height="551" fill="#fff" />
<line x1="390.5" y1="260" x2="390.5" y2="811" stroke="#cacaca" stroke-width="1.2" />
<rect x="430" y="260" width="9" height="551" fill="#6b7282" />
<rect x="431" y="260" width="7" height="551" fill="#aeb7c7" />
<rect x="432.3" y="260" width="4.4" height="551" fill="#1f2b45" />
<rect x="1329" y="260" width="9" height="551" fill="#6b7282" />
<rect x="1330" y="260" width="7" height="551" fill="#aeb7c7" />
<rect x="1331.3" y="260" width="4.4" height="551" fill="#1f2b45" />
<rect x="670" y="260" width="77" height="2.5" fill="#fff200" />
<rect x="559.3" y="316.8" width="79.80000000000007" height="20.80000000000001" fill="#fff200" />
<rect x="666.1" y="267.4" width="73.69999999999993" height="19.900000000000034" fill="#fff200" />
<rect x="666.1" y="293" width="45.60000000000002" height="20" fill="#fff200" />
<rect x="666.1" y="318.6" width="69.39999999999998" height="20.0" fill="#fff200" />
<rect x="779.2" y="317" width="42.799999999999955" height="21" fill="#fff200" />
<rect x="858.8" y="286" width="42.40000000000009" height="20.899999999999977" fill="#fff200" />
<rect x="858.8" y="317" width="43.200000000000045" height="20.899999999999977" fill="#fff200" />
<rect x="951.4" y="317" width="49.39999999999998" height="21" fill="#fff200" />
<rect x="1033" y="288.5" width="86.59999999999991" height="20.100000000000023" fill="#fff200" />
<rect x="1034.7" y="317" width="84.09999999999991" height="20" fill="#fff200" />
<rect x="1143.9" y="261.7" width="68.59999999999991" height="20.900000000000034" fill="#fff200" />
<text x="559.5" y="333.3" font-size="14.6" fill="#1b1b1b" font-weight="bold" textLength="79.5" lengthAdjust="spacingAndGlyphs" >Asset Class</text>
<path d="M647.5 321.8 V327.8 H641.0 M643.7 325.1 L641.0 327.8 L643.7 330.5" fill="none" stroke="#a0a0a0" stroke-width="1.15" />
<text x="666.3" y="283.1" font-size="14.6" fill="#1b1b1b" font-weight="bold" textLength="73.5" lengthAdjust="spacingAndGlyphs" >Allocation</text>
<path d="M748.3 271.6 V277.6 H741.8 M744.5 274.90000000000003 L741.8 277.6 L744.5 280.3" fill="none" stroke="#a0a0a0" stroke-width="1.15" />
<text x="666.7" y="308.6" font-size="14.6" fill="#1b1b1b" font-weight="bold" textLength="42.3" lengthAdjust="spacingAndGlyphs" >(% of</text>
<text x="666.3" y="333.9" font-size="14.6" fill="#1b1b1b" font-weight="bold" textLength="69.5" lengthAdjust="spacingAndGlyphs" >portfolio)</text>
<path d="M744.3 322.4 V328.4 H737.8 M740.5 325.7 L737.8 328.4 L740.5 331.09999999999997" fill="none" stroke="#a0a0a0" stroke-width="1.15" />
<text x="779.5" y="333.3" font-size="14.6" fill="#1b1b1b" font-weight="bold" textLength="42.5" lengthAdjust="spacingAndGlyphs" >Liquid</text>
<path d="M830.5 321.8 V327.8 H824.0 M826.7 325.1 L824.0 327.8 L826.7 330.5" fill="none" stroke="#a0a0a0" stroke-width="1.15" />
<text x="859.0" y="301.9" font-size="14.6" fill="#1b1b1b" font-weight="bold" textLength="42.0" lengthAdjust="spacingAndGlyphs" >Semi-</text>
<text x="859.0" y="333.3" font-size="14.6" fill="#1b1b1b" font-weight="bold" textLength="43.0" lengthAdjust="spacingAndGlyphs" >Liquid</text>
<path d="M910.5 321.8 V327.8 H904.0 M906.7 325.1 L904.0 327.8 L906.7 330.5" fill="none" stroke="#a0a0a0" stroke-width="1.15" />
<text x="951.5" y="333.3" font-size="14.6" fill="#1b1b1b" font-weight="bold" textLength="49.3" lengthAdjust="spacingAndGlyphs" >Illiquid</text>
<path d="M1009.3 321.8 V327.8 H1002.8 M1005.5 325.1 L1002.8 327.8 L1005.5 330.5" fill="none" stroke="#a0a0a0" stroke-width="1.15" />
<text x="1033.0" y="304.9" font-size="14.6" fill="#1b1b1b" font-weight="bold" textLength="86.5" lengthAdjust="spacingAndGlyphs" >Rebalancing</text>
<path d="M1128 293.4 V299.4 H1121.5 M1124.2 296.7 L1121.5 299.4 L1124.2 302.09999999999997" fill="none" stroke="#a0a0a0" stroke-width="1.15" />
<text x="1034.5" y="333.3" font-size="14.6" fill="#1b1b1b" font-weight="bold" textLength="84.3" lengthAdjust="spacingAndGlyphs" >Band Policy</text>
<path d="M1127.3 321.8 V327.8 H1120.8 M1123.5 325.1 L1120.8 327.8 L1123.5 330.5" fill="none" stroke="#a0a0a0" stroke-width="1.15" />
<text x="1144.0" y="278.8" font-size="14.6" fill="#1b1b1b" font-weight="bold" textLength="68.5" lengthAdjust="spacingAndGlyphs" >Deviation</text>
<path d="M1221 267.3 V273.3 H1214.5 M1217.2 270.6 L1214.5 273.3 L1217.2 276.0" fill="none" stroke="#a0a0a0" stroke-width="1.15" />
<text x="1141.1" y="304.9" font-size="14.6" fill="#1b1b1b" font-weight="bold" textLength="74.2" lengthAdjust="spacingAndGlyphs" >of Returns</text>
<path d="M1223.8 293.4 V299.4 H1217.3 M1220.0 296.7 L1217.3 299.4 L1220.0 302.09999999999997" fill="none" stroke="#a0a0a0" stroke-width="1.15" />
<text x="1148.5" y="333.3" font-size="14.6" fill="#1b1b1b" font-weight="bold" textLength="59.3" lengthAdjust="spacingAndGlyphs" >(annual)</text>
<path d="M1216.3 321.8 V327.8 H1209.8 M1212.5 325.1 L1209.8 327.8 L1212.5 330.5" fill="none" stroke="#a0a0a0" stroke-width="1.15" />
<text x="582.0" y="365.5" font-size="14.6" fill="#1b1b1b" textLength="33.3" lengthAdjust="spacingAndGlyphs" >Cash</text>
<path d="M623.8 354.0 V360.0 H617.3 M620.0 357.3 L617.3 360.0 L620.0 362.7" fill="none" stroke="#a0a0a0" stroke-width="1.15" />
<text x="703.5" y="365.5" font-size="14.6" fill="#1b1b1b" textLength="21" lengthAdjust="spacingAndGlyphs" >1%</text>
<path d="M733 354.0 V360.0 H726.5 M729.2 357.3 L726.5 360.0 L729.2 362.7" fill="none" stroke="#a0a0a0" stroke-width="1.15" />
<text x="781.5" y="365.5" font-size="14.6" fill="#1b1b1b" textLength="39" lengthAdjust="spacingAndGlyphs" >100%</text>
<path d="M829 354.0 V360.0 H822.5 M825.2 357.3 L822.5 360.0 L825.2 362.7" fill="none" stroke="#a0a0a0" stroke-width="1.15" />
<text x="869.5" y="365.5" font-size="14.6" fill="#1b1b1b" textLength="21.3" lengthAdjust="spacingAndGlyphs" >0%</text>
<path d="M899.3 354.0 V360.0 H892.8 M895.5 357.3 L892.8 360.0 L895.5 362.7" fill="none" stroke="#a0a0a0" stroke-width="1.15" />
<text x="965.2" y="365.5" font-size="14.6" fill="#1b1b1b" textLength="21.3" lengthAdjust="spacingAndGlyphs" >0%</text>
<path d="M995 354.0 V360.0 H988.5 M991.2 357.3 L988.5 360.0 L991.2 362.7" fill="none" stroke="#a0a0a0" stroke-width="1.15" />
<text x="1042.1" y="365.5" font-size="14.6" fill="#1b1b1b" textLength="68.4" lengthAdjust="spacingAndGlyphs" >0% – 15%</text>
<rect x="1061.2" y="379.7" width="31.09999999999991" height="20.30000000000001" fill="#fff200" />
<text x="1061.5" y="395.3" font-size="14.6" fill="#1b1b1b" textLength="30.5" lengthAdjust="spacingAndGlyphs" >15%</text>
<path d="M1100.5 383.8 V389.8 H1094.0 M1096.7 387.1 L1094.0 389.8 L1096.7 392.5" fill="none" stroke="#a0a0a0" stroke-width="1.15" />
<text x="1160.9" y="365.5" font-size="14.6" fill="#1b1b1b" textLength="34.6" lengthAdjust="spacingAndGlyphs" >1.5%</text>
<path d="M1204 354.0 V360.0 H1197.5 M1200.2 357.3 L1197.5 360.0 L1200.2 362.7" fill="none" stroke="#a0a0a0" stroke-width="1.15" />
<path d="M1238 349.5 V355.5 H1231.5 M1234.2 352.8 L1231.5 355.5 L1234.2 358.2" fill="none" stroke="#a0a0a0" stroke-width="1.15" />
<text x="552.5" y="428.3" font-size="14.6" fill="#1b1b1b" textLength="92.8" lengthAdjust="spacingAndGlyphs" >Fixed Income</text>
<path d="M653.8 416.8 V422.8 H647.3 M650.0 420.1 L647.3 422.8 L650.0 425.5" fill="none" stroke="#a0a0a0" stroke-width="1.15" />
<text x="698.9" y="428.3" font-size="14.6" fill="#1b1b1b" textLength="30.0" lengthAdjust="spacingAndGlyphs" >24%</text>
<path d="M737.4 416.8 V422.8 H730.9 M733.6 420.1 L730.9 422.8 L733.6 425.5" fill="none" stroke="#a0a0a0" stroke-width="1.15" />
<text x="781.5" y="428.3" font-size="14.6" fill="#1b1b1b" textLength="39" lengthAdjust="spacingAndGlyphs" >100%</text>
<path d="M829 416.8 V422.8 H822.5 M825.2 420.1 L822.5 422.8 L825.2 425.5" fill="none" stroke="#a0a0a0" stroke-width="1.15" />
<text x="868.7" y="428.3" font-size="14.6" fill="#1b1b1b" textLength="22.8" lengthAdjust="spacingAndGlyphs" >0%</text>
<path d="M900 416.8 V422.8 H893.5 M896.2 420.1 L893.5 422.8 L896.2 425.5" fill="none" stroke="#a0a0a0" stroke-width="1.15" />
<text x="964.5" y="428.3" font-size="14.6" fill="#1b1b1b" textLength="22.7" lengthAdjust="spacingAndGlyphs" >0%</text>
<path d="M995.7 416.8 V422.8 H989.2 M991.9000000000001 420.1 L989.2 422.8 L991.9000000000001 425.5" fill="none" stroke="#a0a0a0" stroke-width="1.15" />
<text x="1037.9" y="428.3" font-size="14.6" fill="#1b1b1b" textLength="77.1" lengthAdjust="spacingAndGlyphs" >20% – 30%</text>
<path d="M1123.5 416.8 V422.8 H1117.0 M1119.7 420.1 L1117.0 422.8 L1119.7 425.5" fill="none" stroke="#a0a0a0" stroke-width="1.15" />
<rect x="1061.2" y="442.5" width="31.09999999999991" height="20.30000000000001" fill="#fff200" />
<text x="1061.5" y="458.1" font-size="14.6" fill="#1b1b1b" textLength="30.5" lengthAdjust="spacingAndGlyphs" >10%</text>
<path d="M1100.5 446.6 V452.6 H1094.0 M1096.7 449.90000000000003 L1094.0 452.6 L1096.7 455.3" fill="none" stroke="#a0a0a0" stroke-width="1.15" />
<text x="1160.5" y="428.3" font-size="14.6" fill="#1b1b1b" textLength="34.3" lengthAdjust="spacingAndGlyphs" >5.9%</text>
<path d="M1203.3 416.8 V422.8 H1196.8 M1199.5 420.1 L1196.8 422.8 L1199.5 425.5" fill="none" stroke="#a0a0a0" stroke-width="1.15" />
<path d="M1238 412.3 V418.3 H1231.5 M1234.2 415.6 L1231.5 418.3 L1234.2 421.0" fill="none" stroke="#a0a0a0" stroke-width="1.15" />
<text x="554.1" y="491.0" font-size="14.6" fill="#1b1b1b" textLength="89.7" lengthAdjust="spacingAndGlyphs" >Public Equity</text>
<path d="M652.3 479.5 V485.5 H645.8 M648.5 482.8 L645.8 485.5 L648.5 488.2" fill="none" stroke="#a0a0a0" stroke-width="1.15" />
<text x="698.9" y="491.0" font-size="14.6" fill="#1b1b1b" textLength="30.0" lengthAdjust="spacingAndGlyphs" >39%</text>
<path d="M737.4 479.5 V485.5 H730.9 M733.6 482.8 L730.9 485.5 L733.6 488.2" fill="none" stroke="#a0a0a0" stroke-width="1.15" />
<text x="786.3" y="491.0" font-size="14.6" fill="#1b1b1b" textLength="30.0" lengthAdjust="spacingAndGlyphs" >50%</text>
<path d="M824.8 479.5 V485.5 H818.3 M821.0 482.8 L818.3 485.5 L821.0 488.2" fill="none" stroke="#a0a0a0" stroke-width="1.15" />
<text x="864.3" y="491.0" font-size="14.6" fill="#1b1b1b" textLength="30.6" lengthAdjust="spacingAndGlyphs" >50%</text>
<path d="M903.4 479.5 V485.5 H896.9 M899.6 482.8 L896.9 485.5 L899.6 488.2" fill="none" stroke="#a0a0a0" stroke-width="1.15" />
<text x="964.5" y="491.0" font-size="14.6" fill="#1b1b1b" textLength="22.7" lengthAdjust="spacingAndGlyphs" >0%</text>
<path d="M995.7 479.5 V485.5 H989.2 M991.9000000000001 482.8 L989.2 485.5 L991.9000000000001 488.2" fill="none" stroke="#a0a0a0" stroke-width="1.15" />
<text x="1037.9" y="491.0" font-size="14.6" fill="#1b1b1b" textLength="77.1" lengthAdjust="spacingAndGlyphs" >30% – 40%</text>
<path d="M1123.5 479.5 V485.5 H1117.0 M1119.7 482.8 L1117.0 485.5 L1119.7 488.2" fill="none" stroke="#a0a0a0" stroke-width="1.15" />
<rect x="1061.2" y="505.2" width="31.09999999999991" height="20.30000000000001" fill="#fff200" />
<text x="1061.5" y="520.8" font-size="14.6" fill="#1b1b1b" textLength="30.5" lengthAdjust="spacingAndGlyphs" >10%</text>
<path d="M1100.5 509.29999999999995 V515.3 H1094.0 M1096.7 512.5999999999999 L1094.0 515.3 L1096.7 518.0" fill="none" stroke="#a0a0a0" stroke-width="1.15" />
<text x="1156.1" y="491.0" font-size="14.6" fill="#1b1b1b" textLength="43.6" lengthAdjust="spacingAndGlyphs" >15.4%</text>
<path d="M1208.2 479.5 V485.5 H1201.7 M1204.4 482.8 L1201.7 485.5 L1204.4 488.2" fill="none" stroke="#a0a0a0" stroke-width="1.15" />
<path d="M1238 475.0 V481.0 H1231.5 M1234.2 478.3 L1231.5 481.0 L1234.2 483.7" fill="none" stroke="#a0a0a0" stroke-width="1.15" />
<text x="550.7" y="553.9" font-size="14.6" fill="#1b1b1b" textLength="96.8" lengthAdjust="spacingAndGlyphs" >Private Equity</text>
<path d="M656 542.4 V548.4 H649.5 M652.2 545.6999999999999 L649.5 548.4 L652.2 551.1" fill="none" stroke="#a0a0a0" stroke-width="1.15" />
<text x="698.9" y="553.9" font-size="14.6" fill="#1b1b1b" textLength="30.0" lengthAdjust="spacingAndGlyphs" >21%</text>
<path d="M737.4 542.4 V548.4 H730.9 M733.6 545.6999999999999 L730.9 548.4 L733.6 551.1" fill="none" stroke="#a0a0a0" stroke-width="1.15" />
<text x="790.1" y="553.9" font-size="14.6" fill="#1b1b1b" textLength="21.9" lengthAdjust="spacingAndGlyphs" >0%</text>
<path d="M820.5 542.4 V548.4 H814.0 M816.7 545.6999999999999 L814.0 548.4 L816.7 551.1" fill="none" stroke="#a0a0a0" stroke-width="1.15" />
<text x="868.5" y="553.9" font-size="14.6" fill="#1b1b1b" textLength="23" lengthAdjust="spacingAndGlyphs" >0%</text>
<path d="M900 542.4 V548.4 H893.5 M896.2 545.6999999999999 L893.5 548.4 L896.2 551.1" fill="none" stroke="#a0a0a0" stroke-width="1.15" />
<text x="956.5" y="553.9" font-size="14.6" fill="#1b1b1b" textLength="38.9" lengthAdjust="spacingAndGlyphs" >100%</text>
<path d="M1003.9 542.4 V548.4 H997.4 M1000.1 545.6999999999999 L997.4 548.4 L1000.1 551.1" fill="none" stroke="#a0a0a0" stroke-width="1.15" />
<text x="1037.9" y="553.9" font-size="14.6" fill="#1b1b1b" textLength="77.1" lengthAdjust="spacingAndGlyphs" >20% – 25%</text>
<path d="M1123.5 542.4 V548.4 H1117.0 M1119.7 545.6999999999999 L1117.0 548.4 L1119.7 551.1" fill="none" stroke="#a0a0a0" stroke-width="1.15" />
<rect x="1065.7" y="568.1" width="22.59999999999991" height="20.299999999999955" fill="#fff200" />
<text x="1066.0" y="583.6999999999999" font-size="14.6" fill="#1b1b1b" textLength="22.0" lengthAdjust="spacingAndGlyphs" >5%</text>
<path d="M1096.5 572.1999999999999 V578.1999999999999 H1090.0 M1092.7 575.4999999999999 L1090.0 578.1999999999999 L1092.7 580.9" fill="none" stroke="#a0a0a0" stroke-width="1.15" />
<text x="1156.1" y="553.9" font-size="14.6" fill="#1b1b1b" textLength="43.6" lengthAdjust="spacingAndGlyphs" >27.2%</text>
<path d="M1208.2 542.4 V548.4 H1201.7 M1204.4 545.6999999999999 L1201.7 548.4 L1204.4 551.1" fill="none" stroke="#a0a0a0" stroke-width="1.15" />
<path d="M1238 537.9 V543.9 H1231.5 M1234.2 541.1999999999999 L1231.5 543.9 L1234.2 546.6" fill="none" stroke="#a0a0a0" stroke-width="1.15" />
<text x="559.2" y="616.6" font-size="14.6" fill="#1b1b1b" textLength="78.9" lengthAdjust="spacingAndGlyphs" >Real Assets</text>
<path d="M646.6 605.1 V611.1 H640.1 M642.8000000000001 608.4 L640.1 611.1 L642.8000000000001 613.8000000000001" fill="none" stroke="#a0a0a0" stroke-width="1.15" />
<text x="698.9" y="616.6" font-size="14.6" fill="#1b1b1b" textLength="30.0" lengthAdjust="spacingAndGlyphs" >15%</text>
<path d="M737.4 605.1 V611.1 H730.9 M733.6 608.4 L730.9 611.1 L733.6 613.8000000000001" fill="none" stroke="#a0a0a0" stroke-width="1.15" />
<text x="790.1" y="616.6" font-size="14.6" fill="#1b1b1b" textLength="21.9" lengthAdjust="spacingAndGlyphs" >0%</text>
<path d="M820.5 605.1 V611.1 H814.0 M816.7 608.4 L814.0 611.1 L816.7 613.8000000000001" fill="none" stroke="#a0a0a0" stroke-width="1.15" />
<text x="864.3" y="616.6" font-size="14.6" fill="#1b1b1b" textLength="30.6" lengthAdjust="spacingAndGlyphs" >50%</text>
<path d="M903.4 605.1 V611.1 H896.9 M899.6 608.4 L896.9 611.1 L899.6 613.8000000000001" fill="none" stroke="#a0a0a0" stroke-width="1.15" />
<text x="960.7" y="616.6" font-size="14.6" fill="#1b1b1b" textLength="30.3" lengthAdjust="spacingAndGlyphs" >50%</text>
<path d="M999.5 605.1 V611.1 H993.0 M995.7 608.4 L993.0 611.1 L995.7 613.8000000000001" fill="none" stroke="#a0a0a0" stroke-width="1.15" />
<text x="1037.9" y="616.6" font-size="14.6" fill="#1b1b1b" textLength="77.1" lengthAdjust="spacingAndGlyphs" >10% – 20%</text>
<path d="M1123.5 605.1 V611.1 H1117.0 M1119.7 608.4 L1117.0 611.1 L1119.7 613.8000000000001" fill="none" stroke="#a0a0a0" stroke-width="1.15" />
<rect x="1061.2" y="630.8000000000001" width="31.09999999999991" height="20.299999999999955" fill="#fff200" />
<text x="1061.5" y="646.4" font-size="14.6" fill="#1b1b1b" textLength="30.5" lengthAdjust="spacingAndGlyphs" >10%</text>
<path d="M1100.5 634.9 V640.9 H1094.0 M1096.7 638.1999999999999 L1094.0 640.9 L1096.7 643.6" fill="none" stroke="#a0a0a0" stroke-width="1.15" />
<text x="1156.1" y="616.6" font-size="14.6" fill="#1b1b1b" textLength="43.6" lengthAdjust="spacingAndGlyphs" >11.7%</text>
<path d="M1208.2 605.1 V611.1 H1201.7 M1204.4 608.4 L1201.7 611.1 L1204.4 613.8000000000001" fill="none" stroke="#a0a0a0" stroke-width="1.15" />
<path d="M1238 600.6 V606.6 H1231.5 M1234.2 603.9 L1231.5 606.6 L1234.2 609.3000000000001" fill="none" stroke="#a0a0a0" stroke-width="1.15" />
<line x1="539.5" y1="260" x2="539.5" y2="656.5" stroke="#222" stroke-width="1.5" />
<line x1="656.5" y1="260" x2="656.5" y2="656.5" stroke="#222" stroke-width="1.5" />
<line x1="770.5" y1="260" x2="770.5" y2="656.5" stroke="#222" stroke-width="1.5" />
<line x1="832" y1="260" x2="832" y2="656.5" stroke="#222" stroke-width="1.5" />
<line x1="928" y1="260" x2="928" y2="656.5" stroke="#222" stroke-width="1.5" />
<line x1="1024" y1="260" x2="1024" y2="656.5" stroke="#222" stroke-width="1.5" />
<line x1="1130" y1="260" x2="1130" y2="656.5" stroke="#222" stroke-width="1.5" />
<line x1="1227.5" y1="260" x2="1227.5" y2="656.5" stroke="#222" stroke-width="1.5" />
<line x1="539" y1="343" x2="1228.3" y2="343" stroke="#222" stroke-width="1.5" />
<line x1="539" y1="405.7" x2="1228.3" y2="405.7" stroke="#222" stroke-width="1.5" />
<line x1="539" y1="468.4" x2="1228.3" y2="468.4" stroke="#222" stroke-width="1.5" />
<line x1="539" y1="531.3" x2="1228.3" y2="531.3" stroke="#222" stroke-width="1.5" />
<line x1="539" y1="594.2" x2="1228.3" y2="594.2" stroke="#222" stroke-width="1.5" />
<line x1="539" y1="656" x2="1228.3" y2="656" stroke="#222" stroke-width="1.5" />
<rect x="599.5" y="658" width="222.29999999999995" height="21.200000000000045" fill="#fff200" />
<rect x="951.3" y="658.4" width="150.20000000000005" height="21.0" fill="#fff200" />
<text x="570.1" y="675" font-size="14.6" fill="#1b1b1b" textLength="24.4" lengthAdjust="spacingAndGlyphs" >The</text>
<text x="599.5" y="675" font-size="14.6" fill="#1b1b1b" textLength="222" lengthAdjust="spacingAndGlyphs" >university investment committe</text>
<text x="821.5" y="675" font-size="14.6" fill="#1b1b1b" textLength="126" lengthAdjust="spacingAndGlyphs" >e is performing its</text>
<text x="951.5" y="675" font-size="14.6" fill="#1b1b1b" textLength="149.5" lengthAdjust="spacingAndGlyphs" >quarterly assessment</text>
<text x="1104.5" y="675" font-size="14.6" fill="#1b1b1b" textLength="123.4" lengthAdjust="spacingAndGlyphs" >and requests that</text>
<rect x="689.6" y="684.7" width="171.0" height="21.799999999999955" fill="#fff200" />
<text x="539.8" y="702" font-size="14.6" fill="#1b1b1b" textLength="145.7" lengthAdjust="spacingAndGlyphs" >Bookman review the</text>
<text x="690.0" y="702" font-size="14.6" fill="#1b1b1b" textLength="169.5" lengthAdjust="spacingAndGlyphs" >rebalancing band policy.</text>
<path d="M868 690.5 V696.5 H861.5 M864.2 693.8 L861.5 696.5 L864.2 699.2" fill="none" stroke="#a0a0a0" stroke-width="1.15" />
<rect x="1105.4" y="714.5" width="123.19999999999982" height="20.899999999999977" fill="#fff200" />
<text x="539.8" y="731" font-size="14.6" fill="#1b1b1b" font-weight="bold" textLength="13.7" lengthAdjust="spacingAndGlyphs" >1.</text>
<text x="570.1" y="731" font-size="14.6" fill="#1b1b1b" font-weight="bold" textLength="55.7" lengthAdjust="spacingAndGlyphs" >Identify</text>
<text x="631.0" y="731" font-size="14.6" fill="#1b1b1b" textLength="146.9" lengthAdjust="spacingAndGlyphs" >which asset class(es)</text>
<text x="782.5" y="731" font-size="14.6" fill="#1b1b1b" textLength="257.4" lengthAdjust="spacingAndGlyphs" >Bookman is most likely to note as in</text>
<text x="1047.5" y="731" font-size="14.6" fill="#1b1b1b" textLength="53.6" lengthAdjust="spacingAndGlyphs" >need of</text>
<text x="1105.5" y="731" font-size="14.6" fill="#1b1b1b" textLength="122.5" lengthAdjust="spacingAndGlyphs" >rebalancing band</text>
<rect x="570" y="744" width="129.89999999999998" height="21" fill="#fff200" />
<rect x="703.7" y="744" width="171.69999999999993" height="21" fill="#fff200" />
<text x="570.1" y="760.7" font-size="14.6" fill="#1b1b1b" textLength="128.9" lengthAdjust="spacingAndGlyphs" >policy adjustment.</text>
<text x="704.0" y="760.7" font-size="14.6" fill="#1b1b1b" font-weight="bold" textLength="47.5" lengthAdjust="spacingAndGlyphs" >Justify</text>
<text x="754.5" y="760.7" font-size="14.6" fill="#1b1b1b" textLength="120.5" lengthAdjust="spacingAndGlyphs" >your selection(s).</text>
<text x="884" y="761" font-size="16.5" fill="#333" textLength="136" lengthAdjust="spacingAndGlyphs" >波动大，宽度宽；</text>
<text x="1023.5" y="760.5" font-size="14.6" fill="#1b1b1b" textLength="40.5" lengthAdjust="spacingAndGlyphs" >bo'do</text>
<line x1="1024" y1="763" x2="1064" y2="763" stroke="#555" stroke-width="1" stroke-dasharray="1.2 1.2"/>
<line x1="1064.5" y1="746" x2="1064.5" y2="765" stroke="#000" stroke-width="1" />
<path d="M1074 749.0 V755.0 H1067.5 M1070.2 752.3 L1067.5 755.0 L1070.2 757.7" fill="none" stroke="#a0a0a0" stroke-width="1.15" />
<line x1="539.5" y1="771.5" x2="1228.5" y2="771.5" stroke="#222" stroke-width="1.5" />
<line x1="539.5" y1="771" x2="539.5" y2="811" stroke="#222" stroke-width="1.5" />
<text x="549.5" y="789.9" font-size="14.6" fill="#1b1b1b" font-weight="bold" textLength="56" lengthAdjust="spacingAndGlyphs" >Identify</text>
<text x="609.0" y="789.9" font-size="14.6" fill="#1b1b1b" textLength="204.5" lengthAdjust="spacingAndGlyphs" >which asset class(es) Bookman</text>
<text x="549.5" y="818.5" font-size="14.6" fill="#1b1b1b" textLength="217" lengthAdjust="spacingAndGlyphs" >Bookman is most likely to note as</text>
<path d="M1079.4 696.9 L1055.3 726.2 L1062.3 731.6 L1038.2 741.3 L1044.2 716 L1050.7 722.2 L1076.6 694.5 Z" fill="#f0302c" />
<circle cx="1078" cy="695.7" r="1.75" fill="#f0302c"/>
<rect x="332" y="811" width="1091" height="22.5" fill="#f1f1f1" />
<line x1="332" y1="811.5" x2="1423" y2="811.5" stroke="#dcdcdc" stroke-width="1" />
<text x="340" y="827.5" font-size="12.5" fill="#444" textLength="104" lengthAdjust="spacingAndGlyphs" >第 1 页，共 21 页</text>
<text x="464" y="827.5" font-size="12.5" fill="#444" textLength="60" lengthAdjust="spacingAndGlyphs" >7035 个字</text>
<path d="M546 816 h5 q1.5 0 2 1.5 v10 q-0.5-1.2-2-1.2 h-5 Z M553 817.5 q0.5-1.5 2-1.5" fill="none" stroke="#777" stroke-width="1" />
<path d="M554 826 l6 -7 l1.5 1.5 l-6 7 l-2 0.5 Z" fill="none" stroke="#777" stroke-width="1" />
<text x="579" y="827.5" font-size="12.5" fill="#444" textLength="58" lengthAdjust="spacingAndGlyphs" >中文(中国)</text>
<path d="M664 816.5 a6 6 0 1 0 4 10" fill="none" stroke="#555" stroke-width="1.3"/>
<path d="M663 821 l9 9 M672 821 l-9 9" fill="none" stroke="#333" stroke-width="1.5" />
<text x="677" y="827.5" font-size="12.5" fill="#444" textLength="85" lengthAdjust="spacingAndGlyphs" >辅助功能: 调查</text>
<path d="M1112 816 q3.5 -1 7 1 q3.5 -2 7 -1 v12 q-3.5 -1 -7 1 q-3.5 -2 -7 -1 Z M1119 817 v11" fill="none" stroke="#777" stroke-width="1.1" />
<line x1="1113.5" y1="819" x2="1117.5" y2="819" stroke="#888" stroke-width="0.9" />
<line x1="1120.5" y1="819" x2="1124.5" y2="819" stroke="#888" stroke-width="0.9" />
<line x1="1113.5" y1="821.5" x2="1117.5" y2="821.5" stroke="#888" stroke-width="0.9" />
<line x1="1120.5" y1="821.5" x2="1124.5" y2="821.5" stroke="#888" stroke-width="0.9" />
<line x1="1113.5" y1="824" x2="1117.5" y2="824" stroke="#888" stroke-width="0.9" />
<line x1="1120.5" y1="824" x2="1124.5" y2="824" stroke="#888" stroke-width="0.9" />
<rect x="1141" y="813" width="41.5" height="20.5" fill="#c9c9c9" />
<rect x="1154.5" y="816" width="14" height="13" fill="#bdbdbd" stroke="#777" stroke-width="1"/>
<line x1="1156" y1="818.5" x2="1167" y2="818.5" stroke="#777" stroke-width="0.9" />
<line x1="1156" y1="820.8" x2="1167" y2="820.8" stroke="#777" stroke-width="0.9" />
<line x1="1156" y1="823.1" x2="1167" y2="823.1" stroke="#777" stroke-width="0.9" />
<line x1="1156" y1="825.4" x2="1167" y2="825.4" stroke="#777" stroke-width="0.9" />
<line x1="1156" y1="827.5" x2="1167" y2="827.5" stroke="#777" stroke-width="0.9" />
<path d="M1209 821 v-5 h-11 v12 h6" fill="none" stroke="#777" stroke-width="1.1" />
<line x1="1200" y1="819" x2="1206" y2="819" stroke="#888" stroke-width="0.9" />
<line x1="1200" y1="821.5" x2="1206" y2="821.5" stroke="#888" stroke-width="0.9" />
<line x1="1200" y1="824" x2="1206" y2="824" stroke="#888" stroke-width="0.9" />
<circle cx="1208.5" cy="825.5" r="3.8" fill="#777" stroke="#f1f1f1" stroke-width="1"/>
<line x1="1233" y1="822.5" x2="1240" y2="822.5" stroke="#555" stroke-width="1.5" />
<line x1="1246" y1="822.5" x2="1353" y2="822.5" stroke="#8a8a8a" stroke-width="1.3" />
<rect x="1299.5" y="817" width="4.5" height="11" fill="#666" />
<path d="M1357 822.5 h9 M1361.5 818 v9" fill="none" stroke="#555" stroke-width="1.4" />
<text x="1381" y="827.5" font-size="12.5" fill="#444" textLength="32.5" lengthAdjust="spacingAndGlyphs" >117%</text>
<rect x="741" y="767.5" width="682" height="45.5" fill="#f0f0f0" />
<line x1="741" y1="767.5" x2="1423" y2="767.5" stroke="#e2e2e2" stroke-width="1" />
<rect x="741" y="767.5" width="84" height="45.5" fill="#a9d3f7" />
<text x="753.7" y="796.5" font-size="21.5" fill="#2d4a66" textLength="11.5" lengthAdjust="spacingAndGlyphs" >1</text>
<text x="774" y="796.5" font-size="19.5" fill="#1e3a58" textLength="38.5" lengthAdjust="spacingAndGlyphs" >波动</text>
<text x="836.7" y="796.5" font-size="21.5" fill="#7a7a7a" textLength="11.5" lengthAdjust="spacingAndGlyphs" >2</text>
<text x="858.5" y="796.5" font-size="19.5" fill="#333" textLength="38" lengthAdjust="spacingAndGlyphs" >拨动</text>
<text x="920.7" y="796.5" font-size="21.5" fill="#7a7a7a" textLength="11.5" lengthAdjust="spacingAndGlyphs" >3</text>
<text x="943" y="796.5" font-size="19.5" fill="#333" textLength="37.5" lengthAdjust="spacingAndGlyphs" >搏动</text>
<text x="1005.2" y="796.5" font-size="21.5" fill="#7a7a7a" textLength="11.5" lengthAdjust="spacingAndGlyphs" >4</text>
<text x="1026" y="796.5" font-size="19.5" fill="#333" textLength="66.5" lengthAdjust="spacingAndGlyphs" >Bodoni</text>
<text x="1117.2" y="796.5" font-size="21.5" fill="#7a7a7a" textLength="11.5" lengthAdjust="spacingAndGlyphs" >5</text>
<text x="1138.5" y="796.5" font-size="19.5" fill="#333" textLength="19" lengthAdjust="spacingAndGlyphs" >博</text>
<text x="1182.2" y="796.5" font-size="21.5" fill="#7a7a7a" textLength="11.5" lengthAdjust="spacingAndGlyphs" >6</text>
<text x="1202.5" y="796.5" font-size="19.5" fill="#333" textLength="20" lengthAdjust="spacingAndGlyphs" >波</text>
<text x="1247.2" y="796.5" font-size="21.5" fill="#7a7a7a" textLength="11.5" lengthAdjust="spacingAndGlyphs" >7</text>
<text x="1267" y="796.5" font-size="19.5" fill="#333" textLength="20" lengthAdjust="spacingAndGlyphs" >播</text>
<line x1="1300.5" y1="770" x2="1300.5" y2="810" stroke="#dedede" stroke-width="1" />
<path d="M1318 784 L1313 790.5 L1318 797" fill="none" stroke="#aaa" stroke-width="1.4" />
<path d="M1352.5 784 L1357.5 790.5 L1352.5 797" fill="none" stroke="#444" stroke-width="1.4" />
<line x1="1370.5" y1="770" x2="1370.5" y2="810" stroke="#dedede" stroke-width="1" />
<circle cx="1396.5" cy="790.5" r="8.6" fill="none" stroke="#333" stroke-width="1.4"/>
<circle cx="1393.5" cy="788" r="1.1" fill="#333"/><circle cx="1399.5" cy="788" r="1.1" fill="#333"/>
<path d="M1392 792.5 q4.5 4 9 0" fill="none" stroke="#333" stroke-width="1.3" />
<path d="M1162 796 L1162 813 L1166 809.5 L1169 816 L1171.5 815 L1168.5 808.5 L1174 808.5 Z" fill="#fff" stroke="#222" stroke-width="1.1" />
<rect x="796" y="84" width="160.5" height="31" fill="#3d3c3e" rx="6"/>
<text x="802.5" y="104" font-size="15" fill="#fff" textLength="111.5" lengthAdjust="spacingAndGlyphs" >Picture in picture</text>
<path d="M940 90 h9 v8 M930 96 v9 h7" fill="none" stroke="#fff" stroke-width="1.5" />
<path d="M931 90 L938 97 M938 92.5 v4.5 h-4.5" fill="none" stroke="#fff" stroke-width="1.5" />
<rect x="940" y="99.5" width="9.5" height="7" fill="#fff" rx="1"/>
<path d="M905 117 l3 2.5 l3 -2.5" fill="none" stroke="#c8d4e8" stroke-width="1.2" />
<rect x="0" y="833" width="1579" height="4.5" fill="#9aa0a3" />
<rect x="440" y="833" width="89" height="4.5" fill="#c9cdcf" />
<rect x="0" y="833" width="440" height="4.5" fill="#1ab4dc" />
<rect x="0" y="837.5" width="1579" height="38.5" fill="#050b12" />
<rect x="332" y="837.5" width="1091" height="38.5" fill="#1b2229" />
<rect x="332" y="837.5" width="1091" height="5" fill="#10151c" />
<rect x="0" y="876" width="1579" height="20" fill="#363636" />
<rect x="1568.5" y="891.5" width="20" height="12" fill="none" rx="4" stroke="#e0e0e0" stroke-width="1.5"/>
<path d="M7 848 L22 857.3 L7 866.5 Z" fill="#e8ecf0" />
<text x="36" y="865" font-size="12.5" fill="#fff" font-weight="bold" textLength="31.5" lengthAdjust="spacingAndGlyphs" >03:02</text>
<text x="71" y="865" font-size="12.5" fill="#a8adb2" textLength="40.5" lengthAdjust="spacingAndGlyphs" >/ 12:12</text>
<circle cx="49" cy="765" r="32" fill="#f4f4f4"/>
<path d="M42.5 752 L63.5 765 L42.5 778 Z" fill="#333" />
</svg>
</body></html>
